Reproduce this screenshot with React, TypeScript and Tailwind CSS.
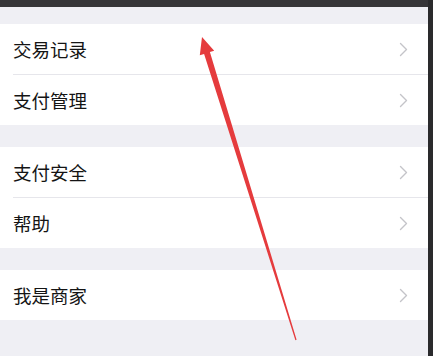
import React from 'react';

const groups = [
  ['交易记录', '支付管理'],
  ['支付安全', '帮助'],
  ['我是商家'],
];

const Chevron = () => (
  <svg width="9" height="15" viewBox="0 0 9 15" fill="none" className="mr-[20px]">
    <polyline points="1.5,1.5 7.5,7.5 1.5,13.5" stroke="#c4c4c9" strokeWidth="1.4" strokeLinecap="round" strokeLinejoin="round" />
  </svg>
);

const App = () => {
  return (
    <div className="relative flex h-[356px] w-[433px] overflow-hidden bg-[#2d2d2f] font-['Noto_Sans_CJK_SC',sans-serif]">
      <div className="flex flex-1 flex-col bg-[#efeff4]">
        <div className="h-[7px] bg-[#363538]" />
        <div className="h-[17px]" />
        {groups.map((items, gi) => (
          <div key={gi} className={gi > 0 ? 'mt-[22px] bg-white' : 'bg-white'}>
            {items.map((label, i) => (
              <div key={label} className="pl-[13px]">
                <div
                  className={
                    i > 0
                      ? 'flex h-[51px] items-center justify-between border-t border-[#e6e6eb]'
                      : 'flex h-[50px] items-center justify-between'
                  }
                >
                  <span className="text-[18.5px] leading-none text-[#141414]">{label}</span>
                  <Chevron />
                </div>
              </div>
            ))}
          </div>
        ))}
      </div>
      <div className="w-[5px] bg-[#2a2a2c]" />

      {/* red arrow annotation */}
      <svg className="pointer-events-none absolute left-0 top-0" width="433" height="356" viewBox="0 0 433 356">
        <polygon
          points="202,37 214.2,50.8 209.9,52.1 296.6,339.8 295.4,340.2 204.1,53.9 199.8,55.2"
          fill="#e53b3d"
        />
      </svg>
    </div>
  );
};

export default App;
